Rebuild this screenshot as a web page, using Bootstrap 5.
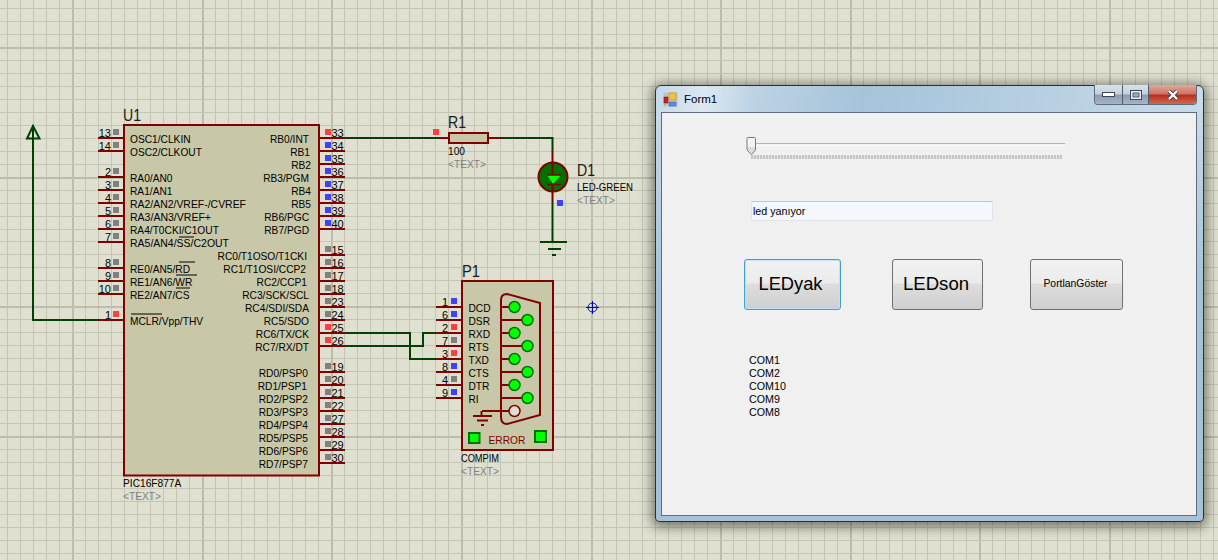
<!DOCTYPE html>
<html lang="en">
<head>
  <meta charset="UTF-8">
  <meta name="viewport" content="width=device-width, initial-scale=1.0">
  <title>Proteus + Form1</title>
  <link href="https://cdn.jsdelivr.net/npm/bootstrap@5.3.0/dist/css/bootstrap.min.css" rel="stylesheet">
  <style>
    html, body { height: 560px; overflow: hidden; }
    body { background: #dfe0cf; font-family: "Liberation Sans", Arial, sans-serif; position: relative; }
    #sheet { display: block; position: absolute; left: 0; top: 0; }
    #sheet text { font-family: "Liberation Sans", Arial, sans-serif; font-size: 10.2px; fill: #000; }
    #sheet text.big { font-size: 17px; fill: #1a1a1a; }
    #sheet text.num { font-size: 11px; }
    #sheet text.ghost { fill: #808080; }
    #sheet text.err { fill: #800000; }

    /* the Form1 window sits over the schematic */
    .aero-win {
      position: absolute; left: 655px; top: 85px; width: 549px; height: 437px;
      display: flex; flex-direction: column;
      padding: 0 6px 5px 5px;
      border: 1px solid #2b3036; border-radius: 6px 6px 4px 4px;
      background: linear-gradient(100deg, #c4d8e8 0%, #dbe8f2 9%, #bcd3e5 18%, #a6c3da 38%, #b6cfe2 70%, #c8dbe9 100%) top / 100% 27px no-repeat,
        linear-gradient(#c6dae9 27px, #a6c2d9 200px);
      box-shadow: 0 2px 12px 3px rgba(30, 32, 24, .55);
    }
    .aero-title { height: 26px; flex: none; gap: 6px; padding-left: 2px; font-size: 11.5px; color: #000; }
    .aero-title span { margin-top: 1px; }
    .win-caps {
      position: absolute; right: 6px; top: -1px; height: 20px; display: flex;
      border: 1px solid #5d6b7c; border-top: 0; border-radius: 0 0 4px 4px; overflow: hidden;
    }
    .cap-btn { height: 19px; display: flex; align-items: center; justify-content: center; border-right: 1px solid #4f5c6c; background: linear-gradient(#d8e2ec 0%, #c5d0dc 48%, #8c9cb0 52%, #a5b5c6 100%); }
    .cap-min { width: 28px; }
    .cap-max { width: 26px; }
    .cap-close { width: 47px; border-right: 0; background: linear-gradient(#e0a79c 0%, #cf7566 45%, #b8301e 55%, #d06a50 100%); }

    .form-area {
      flex: 1; background: #f0f0f0; border: 1px solid #5f6d7b;
      padding: 24px 0 0 82px; font-size: 10.7px; color: #000;
    }
    .slider-box { width: 319px; height: 25px; position: relative; margin-left: 2px; }
    .slider-track { position: absolute; left: 10px; right: 0; top: 6px; height: 3px; border-top: 1px solid #b4b4b4; border-bottom: 1px solid #fafafa; }
    .slider-thumb { position: absolute; left: 0; top: 0; }
    .slider-ticks {
      position: absolute; left: 5px; right: 3px; top: 18px; height: 4px;
      background: repeating-linear-gradient(90deg, #c4c4c4 0 2px, #e8e8e8 2px 3px);
    }
    .led-box.form-control {
      width: 242px; height: 20px; margin: 39px 0 0 7px; padding: 0 1px;
      font-size: 10.7px; line-height: 18px; color: #000; border-radius: 2px;
      background: #f4f7fd; border: 1px solid #e2e3ea; border-top-color: #c3c5ca;
    }
    .btn-row { margin-top: 38px; }
    .win-btn.btn {
      height: 51px; padding: 0; color: #000; border: 1px solid #707070; border-radius: 3px;
      font-size: 18.3px; line-height: 1;
      background: linear-gradient(#f2f2f2 0%, #ebebeb 47%, #dddddd 49%, #cfcfcf 100%);
    }
    .btn-yak.btn { width: 97px; padding-right: 4px; border-color: #3aa3d6; box-shadow: inset 0 0 0 1px #bfe3f5; }
    .btn-son.btn { width: 91px; margin-left: 51px; padding-right: 3px; font-size: 18.6px; }
    .btn-port.btn { width: 93px; margin-left: 47px; padding-right: 2px; font-size: 10.4px; }
    .port-list { margin: 44px 0 0 5px; padding: 0; line-height: 13px; }
  </style>
</head>
<body>
  <svg id="sheet" width="1218" height="560" viewBox="0 0 1218 560" xmlns="http://www.w3.org/2000/svg"></svg>

  <div class="aero-win">
    <div class="aero-title d-flex align-items-center">
      <svg width="15" height="15" viewBox="0 0 15 15">
        <rect x="0" y="0" width="15" height="15" fill="#c9cfd4"/>
        <rect x="1" y="1" width="4" height="3" fill="#b4c2d4"/>
        <rect x="1" y="5" width="4" height="6" fill="#d02020" stroke="#801010" stroke-width=".6"/>
        <rect x="1" y="12" width="2" height="2" fill="#a8b0b8"/>
        <rect x="6" y="1" width="7" height="7" fill="#f6c430" stroke="#b88a10" stroke-width=".6"/>
        <rect x="6" y="10" width="7" height="4" fill="#5a8fe0" stroke="#3060b0" stroke-width=".6"/>
      </svg>
      <span>Form1</span>
    </div>
    <div class="win-caps">
      <div class="cap-btn cap-min"><svg width="13" height="6" viewBox="0 0 13 6"><rect x=".5" y=".5" width="12" height="4" fill="#fff" stroke="#3c4858"/></svg></div>
      <div class="cap-btn cap-max"><svg width="12" height="10" viewBox="0 0 12 10"><rect x=".5" y=".5" width="11" height="9" fill="#e8eef4" stroke="#3c4858"/><rect x="3" y="3" width="6" height="4" fill="#9fb0c2" stroke="#3c4858" stroke-width=".8"/></svg></div>
      <div class="cap-btn cap-close"><svg width="12" height="10" viewBox="0 0 12 10"><path d="M2 1 L10 9 M10 1 L2 9" stroke="#3c3c48" stroke-width="4"/><path d="M2 1 L10 9 M10 1 L2 9" stroke="#fff" stroke-width="2.4"/></svg></div>
    </div>

    <div class="form-area">
      <div class="slider-box">
        <div class="slider-track"></div>
        <div class="slider-ticks"></div>
        <svg class="slider-thumb" width="11" height="19" viewBox="0 0 11 19">
          <defs><linearGradient id="thumbfill" x1="0" y1="0" x2="0" y2="1"><stop offset="0" stop-color="#f4f4f4"/><stop offset=".55" stop-color="#f0f0f0"/><stop offset=".6" stop-color="#d8d8d8"/><stop offset="1" stop-color="#e4e4e4"/></linearGradient></defs>
          <path d="M1.5 .5 H8.5 Q9.5 .5 9.5 1.5 V13 L5.5 17.5 L1 13 V1.5 Q1 .5 1.5 .5 Z" fill="url(#thumbfill)" stroke="#7a7a7a"/>
        </svg>
      </div>
      <input class="form-control led-box" type="text" value="led yanıyor">
      <div class="btn-row d-flex">
        <button class="btn win-btn btn-yak">LEDyak</button>
        <button class="btn win-btn btn-son">LEDson</button>
        <button class="btn win-btn btn-port">PortlanGöster</button>
      </div>
      <ul class="port-list list-unstyled">
        <li>COM1</li>
        <li>COM2</li>
        <li>COM10</li>
        <li>COM9</li>
        <li>COM8</li>
      </ul>
    </div>
  </div>

  <script src="https://cdn.jsdelivr.net/npm/bootstrap@5.3.0/dist/js/bootstrap.bundle.min.js"></script>
  <script>
    const MAROON = '#800000', WIRE = '#004000', LIME = '#00ff00', BODY = '#c8c8a8';
    const COL = { g: '#808080', r: '#ff4040', b: '#4040ff' };
    // labels the reference draws wider or narrower than Arial
    const FIT = { 'RA2/AN2/VREF-/CVREF': 116, 'RA3/AN3/VREF+': 81, 'RA5/AN4/SS/C2OUT': 99, 'LED-GREEN': 56, 'COMPIM': 38 };
    let out = '';

    function line(x1, y1, x2, y2, color, w) {
      out += `<line x1="${x1}" y1="${y1}" x2="${x2}" y2="${y2}" stroke="${color}" stroke-width="${w || 2}"/>`;
    }
    function rect(x, y, w, h, fill) { out += `<rect x="${x}" y="${y}" width="${w}" height="${h}" fill="${fill}"/>`; }
    function text(x, y, s, cls, anchor) {
      const fit = FIT[s] ? ` textLength="${FIT[s]}" lengthAdjust="spacingAndGlyphs"` : '';
      out += `<text x="${x}" y="${y}"${cls ? ` class="${cls}"` : ''}${anchor ? ` text-anchor="${anchor}"` : ''}${fit}>${s}</text>`;
    }
    function bigText(x, y, s) { out += `<text x="${x}" y="${y}" class="big" textLength="18" lengthAdjust="spacingAndGlyphs">${s}</text>`; }

    // grid: thin every 12.96px, heavy every tenth
    for (let i = -1; i < 96; i++) {
      const x = Math.round(7.3 + 12.96 * i), heavy = (i + 5) % 10 === 0;
      rect(x, 0, heavy ? 2 : 1, 560, heavy ? '#bcbdac' : '#c4c5b5');
    }
    for (let j = -1; j < 44; j++) {
      const y = Math.round(8.2 + 12.96 * j), heavy = (j + 7) % 10 === 0;
      rect(0, y, 1218, heavy ? 2 : 1, heavy ? '#bcbdac' : '#c4c5b5');
    }

    // wires
    const wires = ['M98 320 H33 V125', 'M345 138 H437', 'M502 138 H552.5 V151', 'M552.5 203 V242',
      'M345 333 H410 V359 H436', 'M345 346 H423 V333 H436'];
    wires.forEach(d => out += `<path d="${d}" fill="none" stroke="${WIRE}" stroke-width="2"/>`);
    // power terminal
    out += `<path d="M33 126 L27 138.5 H39.5 Z" fill="none" stroke="${WIRE}" stroke-width="2"/>`;

    // U1
    out += `<rect x="124" y="125" width="195" height="350.500" fill="${BODY}" stroke="${MAROON}" stroke-width="2"/>`;
    bigText(123, 121, 'U1');
    const leftPins = [['13', 138, 'g', 'OSC1/CLKIN'], ['14', 151, 'g', 'OSC2/CLKOUT'], ['2', 177, 'g', 'RA0/AN0'], ['3', 190, 'g', 'RA1/AN1'],
      ['4', 203, 'g', 'RA2/AN2/VREF-/CVREF'], ['5', 216, 'g', 'RA3/AN3/VREF+'], ['6', 229, 'g', 'RA4/T0CKI/C1OUT'], ['7', 242, 'g', 'RA5/AN4/SS/C2OUT'],
      ['8', 268, 'g', 'RE0/AN5/RD'], ['9', 281, 'g', 'RE1/AN6/WR'], ['10', 294, 'g', 'RE2/AN7/CS'], ['1', 320, 'r', 'MCLR/Vpp/THV']];
    leftPins.forEach(([n, y, c, label]) => {
      line(98, y, 124, y, MAROON);
      rect(113, y - 9, 6, 6, COL[c]);
      text(111, y - 1, n, 'num', 'end');
      text(130, y + 5, label);
    });
    const rightPins = [['33', 138, 'r', 'RB0/INT', 309], ['34', 151, 'b', 'RB1', 310], ['35', 164, 'b', 'RB2', 311], ['36', 177, 'b', 'RB3/PGM', 309],
      ['37', 190, 'b', 'RB4', 311], ['38', 203, 'b', 'RB5', 311], ['39', 216, 'b', 'RB6/PGC', 309], ['40', 229, 'b', 'RB7/PGD', 309],
      ['15', 255, 'g', 'RC0/T1OSO/T1CKI', 307], ['16', 268, 'g', 'RC1/T1OSI/CCP2', 306], ['17', 281, 'g', 'RC2/CCP1', 307], ['18', 294, 'g', 'RC3/SCK/SCL', 309],
      ['23', 307, 'g', 'RC4/SDI/SDA', 309], ['24', 320, 'g', 'RC5/SDO', 309], ['25', 333, 'r', 'RC6/TX/CK', 309], ['26', 346, 'r', 'RC7/RX/DT', 309],
      ['19', 372, 'g', 'RD0/PSP0', 308], ['20', 385, 'g', 'RD1/PSP1', 307], ['21', 398, 'g', 'RD2/PSP2', 308], ['22', 411, 'g', 'RD3/PSP3', 308],
      ['27', 424, 'g', 'RD4/PSP4', 308], ['28', 437, 'g', 'RD5/PSP5', 308], ['29', 450, 'g', 'RD6/PSP6', 308], ['30', 463, 'g', 'RD7/PSP7', 308]];
    rightPins.forEach(([n, y, c, label, x]) => {
      line(319, y, 345, y, MAROON);
      rect(325, y - 9, 6, 6, COL[c]);
      text(331.5, y - 1, n, 'num');
      text(x, y + 5, label, '', 'end');
    });
    // inverted signals
    [[179, 194, 237], [179, 195, 262], [176, 197, 275], [176, 190, 288], [131, 162, 314]].forEach(([a, b, y]) => line(a, y, b, y, '#000', 1));
    text(123, 487, 'PIC16F877A');
    text(123, 500, '&lt;TEXT&gt;', 'ghost');

    // R1
    line(437, 138, 449, 138, MAROON);
    line(488, 138, 502, 138, MAROON);
    out += `<rect x="449" y="133" width="39" height="10" fill="${BODY}" stroke="${MAROON}" stroke-width="2"/>`;
    rect(433, 129, 6, 6, COL.r);
    bigText(448, 128, 'R1');
    text(448, 155, '100');
    text(448, 168, '&lt;TEXT&gt;', 'ghost');

    // D1
    line(552.5, 151, 552.5, 203, MAROON);
    out += `<circle cx="553" cy="177" r="14.500" fill="#007000" stroke="${MAROON}" stroke-width="2"/>`;
    line(552.5, 163, 552.5, 191, MAROON);
    out += `<path d="M547 175 H561 L553 184 Z" fill="${LIME}"/>`;
    line(547, 175, 561, 175, MAROON, 1.5);
    line(547, 184.5, 561, 184.5, MAROON, 1.5);
    rect(557, 200, 6, 6, COL.b);
    bigText(577, 176, 'D1');
    text(577, 191, 'LED-GREEN');
    text(577, 204, '&lt;TEXT&gt;', 'ghost');
    // ground
    line(540, 242, 567, 242, WIRE);
    line(548, 249, 561, 249, WIRE);
    line(552, 255, 556, 255, WIRE);

    // P1
    out += `<rect x="462" y="281" width="91" height="169" fill="${BODY}" stroke="${MAROON}" stroke-width="2"/>`;
    bigText(462, 277, 'P1');
    const comPins = [['1', 307, 'b', 'DCD'], ['6', 320, 'b', 'DSR'], ['2', 333, 'r', 'RXD'], ['7', 346, 'g', 'RTS'],
      ['3', 359, 'r', 'TXD'], ['8', 372, 'b', 'CTS'], ['4', 385, 'g', 'DTR'], ['9', 398, 'b', 'RI']];
    comPins.forEach(([n, y, c, label], i) => {
      line(436, y, 462, y, MAROON);
      rect(451, y - 9, 6, 6, COL[c]);
      text(448, y - 1, n, 'num', 'end');
      text(468.5, y + 5, label);
      line(501, y, i % 2 ? 527 : 515, y, MAROON);
    });
    out += `<path d="M501 300 Q501 294 507 294 L540 303 V415 L507 424 Q501 424 501 417 Z" fill="none" stroke="${MAROON}" stroke-width="2"/>`;
    comPins.forEach((p, i) => {
      out += `<circle cx="${i % 2 ? 527.5 : 514.5}" cy="${p[1]}" r="5.500" fill="${LIME}" stroke="#007000" stroke-width="1.500"/>`;
    });
    line(482, 411, 515, 411, MAROON);
    out += `<circle cx="514.5" cy="411" r="5.500" fill="#e0e0d0" stroke="${MAROON}" stroke-width="1.500"/>`;
    line(481.5, 411, 481.5, 416, MAROON);
    line(473, 416, 492, 416, MAROON);
    line(477, 420.5, 488, 420.5, MAROON);
    line(481, 425, 484, 425, MAROON);
    out += `<rect x="469" y="433" width="10.500" height="10" fill="${LIME}" stroke="#007000" stroke-width="2"/>`;
    out += `<rect x="535" y="431" width="11" height="11" fill="${LIME}" stroke="#007000" stroke-width="2"/>`;
    text(488.5, 444, 'ERROR', 'err');
    text(461, 462, 'COMPIM');
    text(461, 475, '&lt;TEXT&gt;', 'ghost');

    // probe marker
    out += `<circle cx="592.5" cy="307.500" r="4.500" fill="none" stroke="#0000c0" stroke-width="1"/>`;
    line(586, 307.5, 599, 307.5, '#0000c0', 1);
    line(592.5, 301, 592.5, 314, '#0000c0', 1);

    document.getElementById('sheet').innerHTML = out;
  </script>
</body>
</html>
